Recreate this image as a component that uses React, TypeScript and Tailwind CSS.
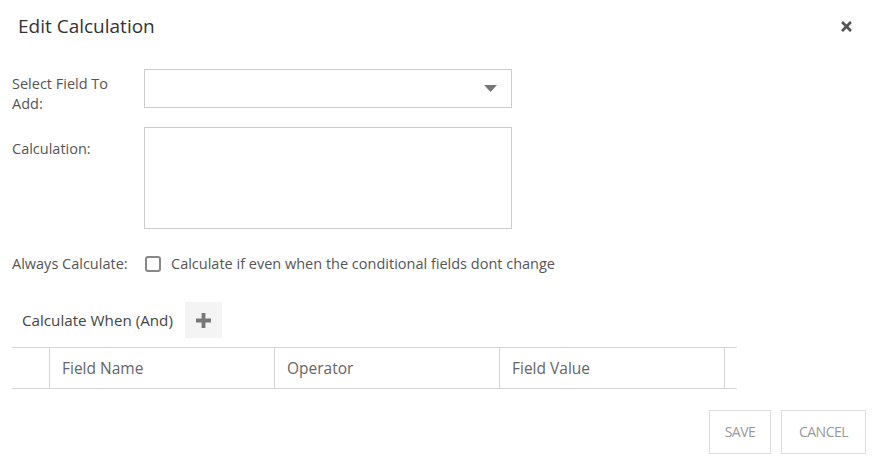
import { FaTimes } from "react-icons/fa"

export default function App() {
  return (
    <div className="h-[462px] w-[875px] bg-white font-['Open_Sans','Noto_Sans',sans-serif] text-[14.5px] leading-[20px] text-[#555]">
      {/* Header */}
      <div className="flex h-[52px] items-center justify-between pl-[18px] pr-[21px]">
        <h2 className="text-[19px] text-[#333]">Edit Calculation</h2>
        <FaTimes className="h-[15px] w-[15px] text-[#555]" />
      </div>

      <div className="px-[12px] pt-[17px]">
        {/* Field selector */}
        <div className="flex h-[39px]">
          <label className="w-[132px] pt-[5px]">
            Select Field To
            <br />
            Add:
          </label>
          <div className="flex h-[39px] w-[368px] items-center justify-end border border-[#ccc] pr-[14px]">
            <svg width="13" height="7" viewBox="0 0 13 7">
              <path d="M0 0h13L6.5 7z" fill="#777" />
            </svg>
          </div>
        </div>

        {/* Calculation text */}
        <div className="mt-[19px] flex">
          <label className="w-[132px] pt-[12px]">Calculation:</label>
          <textarea className="h-[102px] w-[368px] resize-none border border-[#ccc] outline-none" />
        </div>

        {/* Always calculate */}
        <div className="mt-[25px] flex h-[20px] items-center">
          <span className="w-[133px]">Always Calculate:</span>
          <span className="h-[16px] w-[16px] rounded-[3px] border-2 border-[#888]" />
          <span className="ml-[10px]">Calculate if even when the conditional fields dont change</span>
        </div>

        {/* Conditions */}
        <div className="mt-[28px] flex items-center pl-[10px]">
          <span className="text-[15.2px] text-[#444]">Calculate When (And)</span>
          <button className="ml-[12px] flex h-[36px] w-[37px] items-center justify-center bg-[#f4f4f4]">
            <svg width="15" height="15" viewBox="0 0 15 15">
              <path d="M5.6 0h3.8v5.6H15v3.8H9.4V15H5.6V9.4H0V5.6h5.6z" fill="#777" />
            </svg>
          </button>
        </div>

        <div className="mt-[9px] flex h-[42px] w-[725px] border-y border-[#d6d6d6] text-[15.5px] text-[#666]">
          <div className="w-[38px] border-r border-[#d6d6d6]" />
          <div className="flex w-[225px] items-center border-r border-[#d6d6d6] pl-[12px]">Field Name</div>
          <div className="flex w-[225px] items-center border-r border-[#d6d6d6] pl-[12px]">Operator</div>
          <div className="flex w-[225px] items-center border-r border-[#d6d6d6] pl-[12px]">Field Value</div>
        </div>

        {/* Footer actions */}
        <div className="mt-[21px] flex justify-end gap-[10px]">
          <button className="h-[44px] w-[62px] border border-[#ddd] text-[14px] tracking-[-0.5px] text-[#999]">SAVE</button>
          <button className="mr-[-3px] h-[44px] w-[85px] border border-[#ddd] text-[14px] tracking-[-0.5px] text-[#999]">CANCEL</button>
        </div>
      </div>
    </div>
  )
}
